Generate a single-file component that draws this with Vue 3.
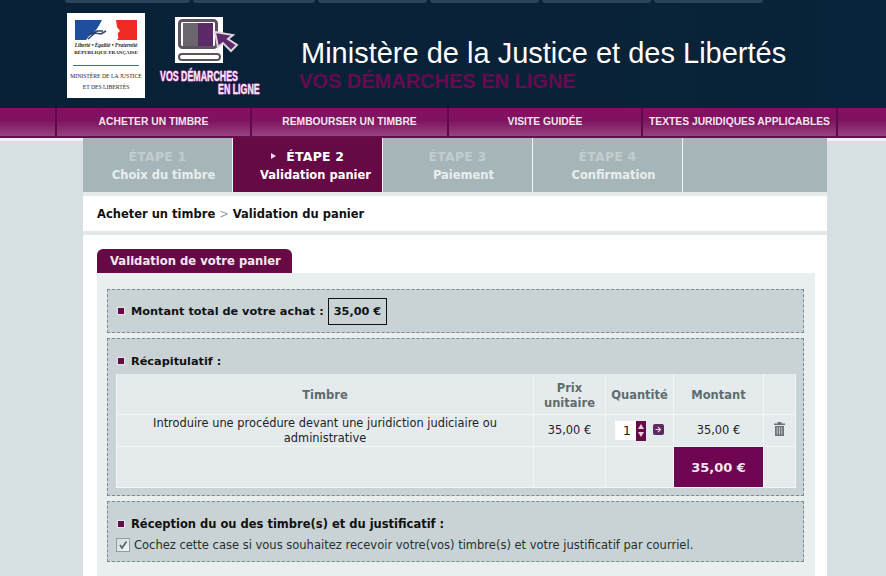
<template>
  <div class="page">
    <header class="site-head">
      <div class="top-tabs">
        <span v-for="(w, i) in topTabs" :key="i" class="top-tab" :style="{ width: w + 'px' }"></span>
      </div>
      <div class="brand">
        <div class="marianne">
          <svg class="flag" width="62" height="20" viewBox="0 0 62 20">
            <path d="M0 0H27C24 5 23 8 20 11L14 16L11 20H0Z" fill="#1f4e9e" />
            <path d="M41 0H62V20H42C45 17 42 15 43 13L45 11L42 7Z" fill="#ee2a24" />
            <path d="M13 19L20 13L26 14L31 11M14 15L22 11L28 11" fill="none" stroke="#2c4472" stroke-width="1.600" />
          </svg>
          <div class="motto">Liberté • Égalité • Fraternité</div>
          <div class="republic">RÉPUBLIQUE FRANÇAISE</div>
          <div class="rule"></div>
          <div class="ministry">MINISTÈRE DE LA JUSTICE</div>
          <div class="ministry second">ET DES LIBERTÉS</div>
        </div>
        <div class="demarches">
          <svg class="screen" width="66" height="50" viewBox="0 0 66 50">
            <rect x="0" y="1" width="48" height="46" fill="#fff" />
            <rect x="4.500" y="4.500" width="37" height="27" rx="3" fill="#fff" stroke="#5d5360" stroke-width="3" />
            <rect x="8" y="7" width="15" height="23" fill="#6b666d" />
            <rect x="23" y="7" width="15" height="23" fill="#5c2a68" />
            <rect x="4" y="38" width="41" height="6" rx="3" fill="#fff" stroke="#5d5360" stroke-width="2" />
            <path d="M40 16L58 19L53 23L62 29L56 35L48 27L43 31Z" fill="#5c2a68" stroke="#ddd2dd" stroke-width="2" />
          </svg>
          <div class="demarches-text first">VOS DÉMARCHES</div>
          <div class="demarches-text last">EN LIGNE</div>
        </div>
        <div class="titles">
          <h1>Ministère de la Justice et des Libertés</h1>
          <p>VOS DÉMARCHES EN LIGNE</p>
        </div>
      </div>
    </header>

    <nav class="main-nav">
      <a v-for="item in navItems" :key="item" class="nav-item">{{ item }}</a>
    </nav>

    <main class="content">
      <div class="steps">
        <div v-for="(step, i) in steps" :key="step.title" class="step" :class="{ active: i === 1 }">
          <div class="step-num">
            <span v-if="i === 1" class="step-arrow"></span>
            {{ step.title }}
          </div>
          <div class="step-label">{{ step.label }}</div>
        </div>
        <div class="step-rest"></div>
      </div>

      <div class="crumbs">
        Acheter un timbre <span class="sep">&gt;</span> Validation du panier
      </div>

      <section class="sheet">
        <div class="sheet-tab">Validation de votre panier</div>
        <div class="panel">
          <div class="box box-total">
            <span class="bullet"></span>
            <strong>Montant total de votre achat :</strong>
            <span class="total-value">35,00 €</span>
          </div>

          <div class="box box-recap">
            <div class="box-title"><span class="bullet"></span><strong>Récapitulatif :</strong></div>
            <table class="recap">
              <colgroup>
                <col style="width: 417px" />
                <col style="width: 72px" />
                <col style="width: 68px" />
                <col style="width: 90px" />
                <col style="width: 32px" />
              </colgroup>
              <thead>
                <tr>
                  <th>Timbre</th>
                  <th>Prix<br />unitaire</th>
                  <th>Quantité</th>
                  <th>Montant</th>
                  <th></th>
                </tr>
              </thead>
              <tbody>
                <tr class="line">
                  <td>Introduire une procédure devant une juridiction judiciaire ou<br />administrative</td>
                  <td>35,00 €</td>
                  <td>
                    <div class="qty">
                      <span class="qty-input">1</span>
                      <span class="spin"><i class="up"></i><i class="down"></i></span>
                      <span class="go">
                        <svg width="11" height="11" viewBox="0 0 11 11">
                          <path d="M2.500 5.500h5M5 3l2.500 2.500L5 8" fill="none" stroke="#e9cfe3" stroke-width="1.100" />
                        </svg>
                      </span>
                    </div>
                  </td>
                  <td>35,00 €</td>
                  <td>
                    <svg class="trash" width="11" height="14" viewBox="0 0 11 14">
                      <path d="M3.500 0h4v1.500H11V3H0V1.500h3.500z" fill="#6a7375" />
                      <path d="M1 4h9v10H1z" fill="#6a7375" />
                      <path d="M3.200 5v7.500M5.500 5v7.500M7.800 5v7.500" stroke="#c8d2d4" stroke-width="0.900" />
                    </svg>
                  </td>
                </tr>
                <tr class="foot">
                  <td></td>
                  <td></td>
                  <td></td>
                  <td class="grand">35,00 €</td>
                  <td></td>
                </tr>
              </tbody>
            </table>
          </div>

          <div class="box box-delivery">
            <div class="box-title"><span class="bullet"></span><strong>Réception du ou des timbre(s) et du justificatif :</strong></div>
            <label class="check-line">
              <span class="check">
                <svg width="12" height="12" viewBox="0 0 12 12">
                  <path d="M3 6l2 3L9.500 2.500" fill="none" stroke="#56646a" stroke-width="1.700" />
                </svg>
              </span>
              Cochez cette case si vous souhaitez recevoir votre(vos) timbre(s) et votre justificatif par courriel.
            </label>
          </div>
        </div>
      </section>
    </main>
  </div>
</template>

<script setup>
const topTabs = [125, 122, 109, 109, 109, 109]

const navItems = [
  'ACHETER UN TIMBRE',
  'REMBOURSER UN TIMBRE',
  'VISITE GUIDÉE',
  'TEXTES JURIDIQUES APPLICABLES',
]

const steps = [
  { title: 'ÉTAPE 1', label: 'Choix du timbre' },
  { title: 'ÉTAPE 2', label: 'Validation panier' },
  { title: 'ÉTAPE 3', label: 'Paiement' },
  { title: 'ÉTAPE 4', label: 'Confirmation' },
]
</script>

<style>
html,
body {
  margin: 0;
  overflow: hidden;
  background: #d6dfe2;
}
</style>

<style scoped>
.page {
  height: 576px;
  overflow: hidden;
  font-family: "DejaVu Sans", Verdana, sans-serif;
  font-size: 11px;
  color: #111;
}

.site-head {
  height: 108px;
  box-sizing: border-box;
  background: linear-gradient(90deg, #092137, #0a2237 60%, #07243a);
}

.top-tabs {
  display: flex;
  gap: 3px;
  height: 3px;
  padding-left: 65px;
}

.top-tab {
  background: #2a4356;
  border-radius: 0 0 4px 4px;
}

.brand {
  display: flex;
  padding: 10px 0 0 67px;
}

.marianne {
  width: 78px;
  height: 85px;
  background: #fff;
  color: #222;
  font-family: "Liberation Serif", serif;
  text-align: center;
  flex-shrink: 0;
}

.flag {
  display: block;
  margin: 7px 0 0 8px;
}

.motto {
  font-size: 5.300px;
  font-style: italic;
  font-weight: bold;
  line-height: 6px;
  margin-top: 2px;
  white-space: nowrap;
}

.republic {
  font-size: 5px;
  font-weight: bold;
  line-height: 6px;
  margin-top: 2px;
  white-space: nowrap;
}

.rule {
  height: 1px;
  margin: 9px 6px 7px;
  background: #4a6a96;
}

.ministry {
  font-size: 5.700px;
  line-height: 7px;
  white-space: nowrap;
}

.second {
  margin-top: 4px;
}

.demarches {
  width: 126px;
  flex-shrink: 0;
  padding: 3px 0 0 30px;
  box-sizing: border-box;
  height: 90px;
  position: relative;
}

.screen {
  display: block;
}

.demarches-text {
  position: absolute;
  color: #f5e8f5;
  font-family: "Liberation Sans", sans-serif;
  font-weight: bold;
  font-size: 14px;
  line-height: 14px;
  white-space: nowrap;
  transform: scaleX(0.63);
  transform-origin: left top;
  -webkit-text-stroke: 0.3px #f5e8f5;
  text-shadow: 0 0 2px #7a1a78, 0 0 2px #7a1a78, 0 0 3px #7a1a78;
}

.first {
  left: 15px;
  top: 56px;
}

.last {
  left: 73px;
  top: 69px;
}

.titles {
  padding: 25px 0 0 30px;
}

.titles h1 {
  margin: 0;
  font-family: "Liberation Sans", sans-serif;
  font-weight: normal;
  font-size: 29px;
  line-height: 31px;
  color: #fff;
  white-space: nowrap;
}

.titles p {
  margin: 0 0 0 -2px;
  font-family: "Liberation Sans", sans-serif;
  font-weight: bold;
  font-size: 20px;
  line-height: 24px;
  color: #660a52;
  white-space: nowrap;
}

.main-nav {
  display: flex;
  height: 28px;
  padding-left: 55px;
  background: linear-gradient(180deg, #860f63 0%, #7f1260 45%, #96447f 100%);
  border-bottom: 2px solid #6b0a50;
  box-shadow: 0 3px 0 #eef3f3;
}

.nav-item {
  display: flex;
  align-items: center;
  justify-content: center;
  box-sizing: border-box;
  padding-bottom: 2px;
  border-left: 2px solid #5f0a4a;
  font-family: "Liberation Sans", sans-serif;
  font-weight: bold;
  font-size: 10.300px;
  color: #f1e6ee;
  white-space: nowrap;
}

.nav-item:nth-child(1) { width: 195px; }
.nav-item:nth-child(2) { width: 197px; }
.nav-item:nth-child(3) { width: 194px; }
.nav-item:nth-child(4) {
  width: 197px;
  border-right: 2px solid #5f0a4a;
}

.content {
  width: 744px;
  margin-left: 83px;
  background: #fff;
}

.steps {
  display: flex;
  height: 54px;
  background: #a6b6b8;
}

.step {
  width: 150px;
  box-sizing: border-box;
  border-right: 1px solid #f2f5f5;
  text-align: center;
  padding-top: 11px;
  color: #c1cdcf;
  font-weight: bold;
}

.step-num {
  font-size: 12.500px;
  line-height: 15px;
  letter-spacing: 0.2px;
}

.step-label {
  margin-top: 4px;
  padding-left: 12px;
  font-size: 11.500px;
  line-height: 14px;
  color: #e8eeee;
}

.step.active {
  background: #660a46;
  color: #fff;
}

.step.active .step-label {
  padding-left: 16px;
  color: #fff;
}

.step-arrow {
  display: inline-block;
  width: 0;
  height: 0;
  margin-right: 6px;
  vertical-align: 2px;
  border-left: 5px solid #f2dcea;
  border-top: 3px solid transparent;
  border-bottom: 3px solid transparent;
}

.step-rest {
  flex: 1;
}

.crumbs {
  height: 35px;
  margin-top: 4px;
  padding-left: 14px;
  font-size: 11.500px;
  line-height: 36px;
  font-weight: bold;
  background: #fff;
  box-sizing: border-box;
  box-shadow: 0 -4px 0 #e6eaeb;
}

.sep {
  color: #9aa3a5;
  font-weight: normal;
}

.sheet {
  border-top: 4px solid #e3e7e8;
  padding: 14px 12px 0 14px;
  background: #fff;
}

.sheet-tab {
  display: inline-block;
  height: 24px;
  padding: 0 11px 0 13px;
  background: #660a46;
  border-radius: 6px 6px 0 0;
  color: #f4e6ef;
  font-weight: bold;
  font-size: 11.600px;
  line-height: 25px;
  vertical-align: top;
}

.panel {
  background: #e9eeee;
  padding: 16px 11px 20px 10px;
  display: flex;
  flex-direction: column;
  gap: 5px;
}

.box {
  background: #c9d3d5;
  border: 1px dashed #7d8a8d;
}

.box-total {
  height: 44px;
  box-sizing: border-box;
  display: flex;
  align-items: center;
  padding-left: 10px;
  font-size: 11.300px;
}

.bullet {
  display: inline-block;
  width: 6px;
  height: 6px;
  margin: 0 7px 0 0;
  background: #660a46;
  box-shadow: 0 0 1px 1px rgba(255, 255, 255, 0.4);
  vertical-align: 1px;
  flex-shrink: 0;
}

.total-value {
  margin-left: 4px;
  padding: 0 5px;
  height: 25px;
  line-height: 25px;
  font-size: 11.300px;
  border: 1px solid #111;
  font-weight: bold;
  white-space: nowrap;
}

.box-recap {
  height: 158px;
  box-sizing: border-box;
  padding: 16px 8px 0;
}

.box-title {
  padding-left: 2px;
  font-size: 11.500px;
  line-height: 14px;
}

.box-recap .box-title {
  font-size: 11.300px;
}

.recap {
  width: 680px;
  margin-top: 5px;
  table-layout: fixed;
  border-collapse: collapse;
  background: #e5ebed;
  font-size: 11.400px;
}

.recap th,
.recap td {
  border: 1px solid #f3f6f6;
  padding: 0;
  text-align: center;
}

.recap tr:first-child th {
  border-top: 0;
}

.recap th {
  height: 40px;
  padding-top: 4px;
  box-sizing: border-box;
  color: #5f6c6f;
  font-weight: bold;
  font-size: 11.500px;
  line-height: 15px;
}

.line td {
  height: 31px;
  box-sizing: border-box;
  padding-top: 1px;
  line-height: 15px;
  color: #1c2426;
}

.foot td {
  height: 41px;
  box-sizing: border-box;
}

.recap .grand {
  padding-top: 2px;
  background: #6f0452;
  color: #f6e4f0;
  font-weight: bold;
  font-size: 13px;
}

.qty {
  display: flex;
  align-items: center;
  justify-content: flex-start;
  padding-left: 9px;
}

.qty-input {
  width: 21px;
  height: 19px;
  background: #fff;
  box-sizing: border-box;
  font-size: 13px;
  line-height: 20px;
  text-align: right;
  padding-right: 5px;
}

.spin {
  width: 10px;
  height: 20px;
  background: #660a46;
  display: flex;
  flex-direction: column;
  align-items: center;
  justify-content: center;
  gap: 3px;
}

.spin i {
  display: block;
  width: 0;
  height: 0;
  border-left: 3px solid transparent;
  border-right: 3px solid transparent;
}

.spin .up {
  border-bottom: 5px solid #e8cfe0;
}

.spin .down {
  border-top: 5px solid #e8cfe0;
}

.go {
  width: 11px;
  height: 11px;
  margin-left: 7px;
  margin-bottom: 2px;
  border-radius: 2px;
  background: #5e2a63;
  display: block;
}

.go svg {
  display: block;
}

.trash {
  display: block;
  margin: -3px auto 0;
}

.box-delivery {
  height: 61px;
  box-sizing: border-box;
  padding: 15px 8px 0;
}

.check-line {
  display: flex;
  align-items: center;
  margin-top: 7px;
  font-size: 11.500px;
  color: #26302f;
  white-space: nowrap;
}

.check {
  width: 12px;
  height: 12px;
  margin-right: 4px;
  border: 1px solid #8e9da3;
  background: linear-gradient(135deg, #d0d9dc, #f6f8f8);
  flex-shrink: 0;
}

.check svg {
  display: block;
}
</style>
